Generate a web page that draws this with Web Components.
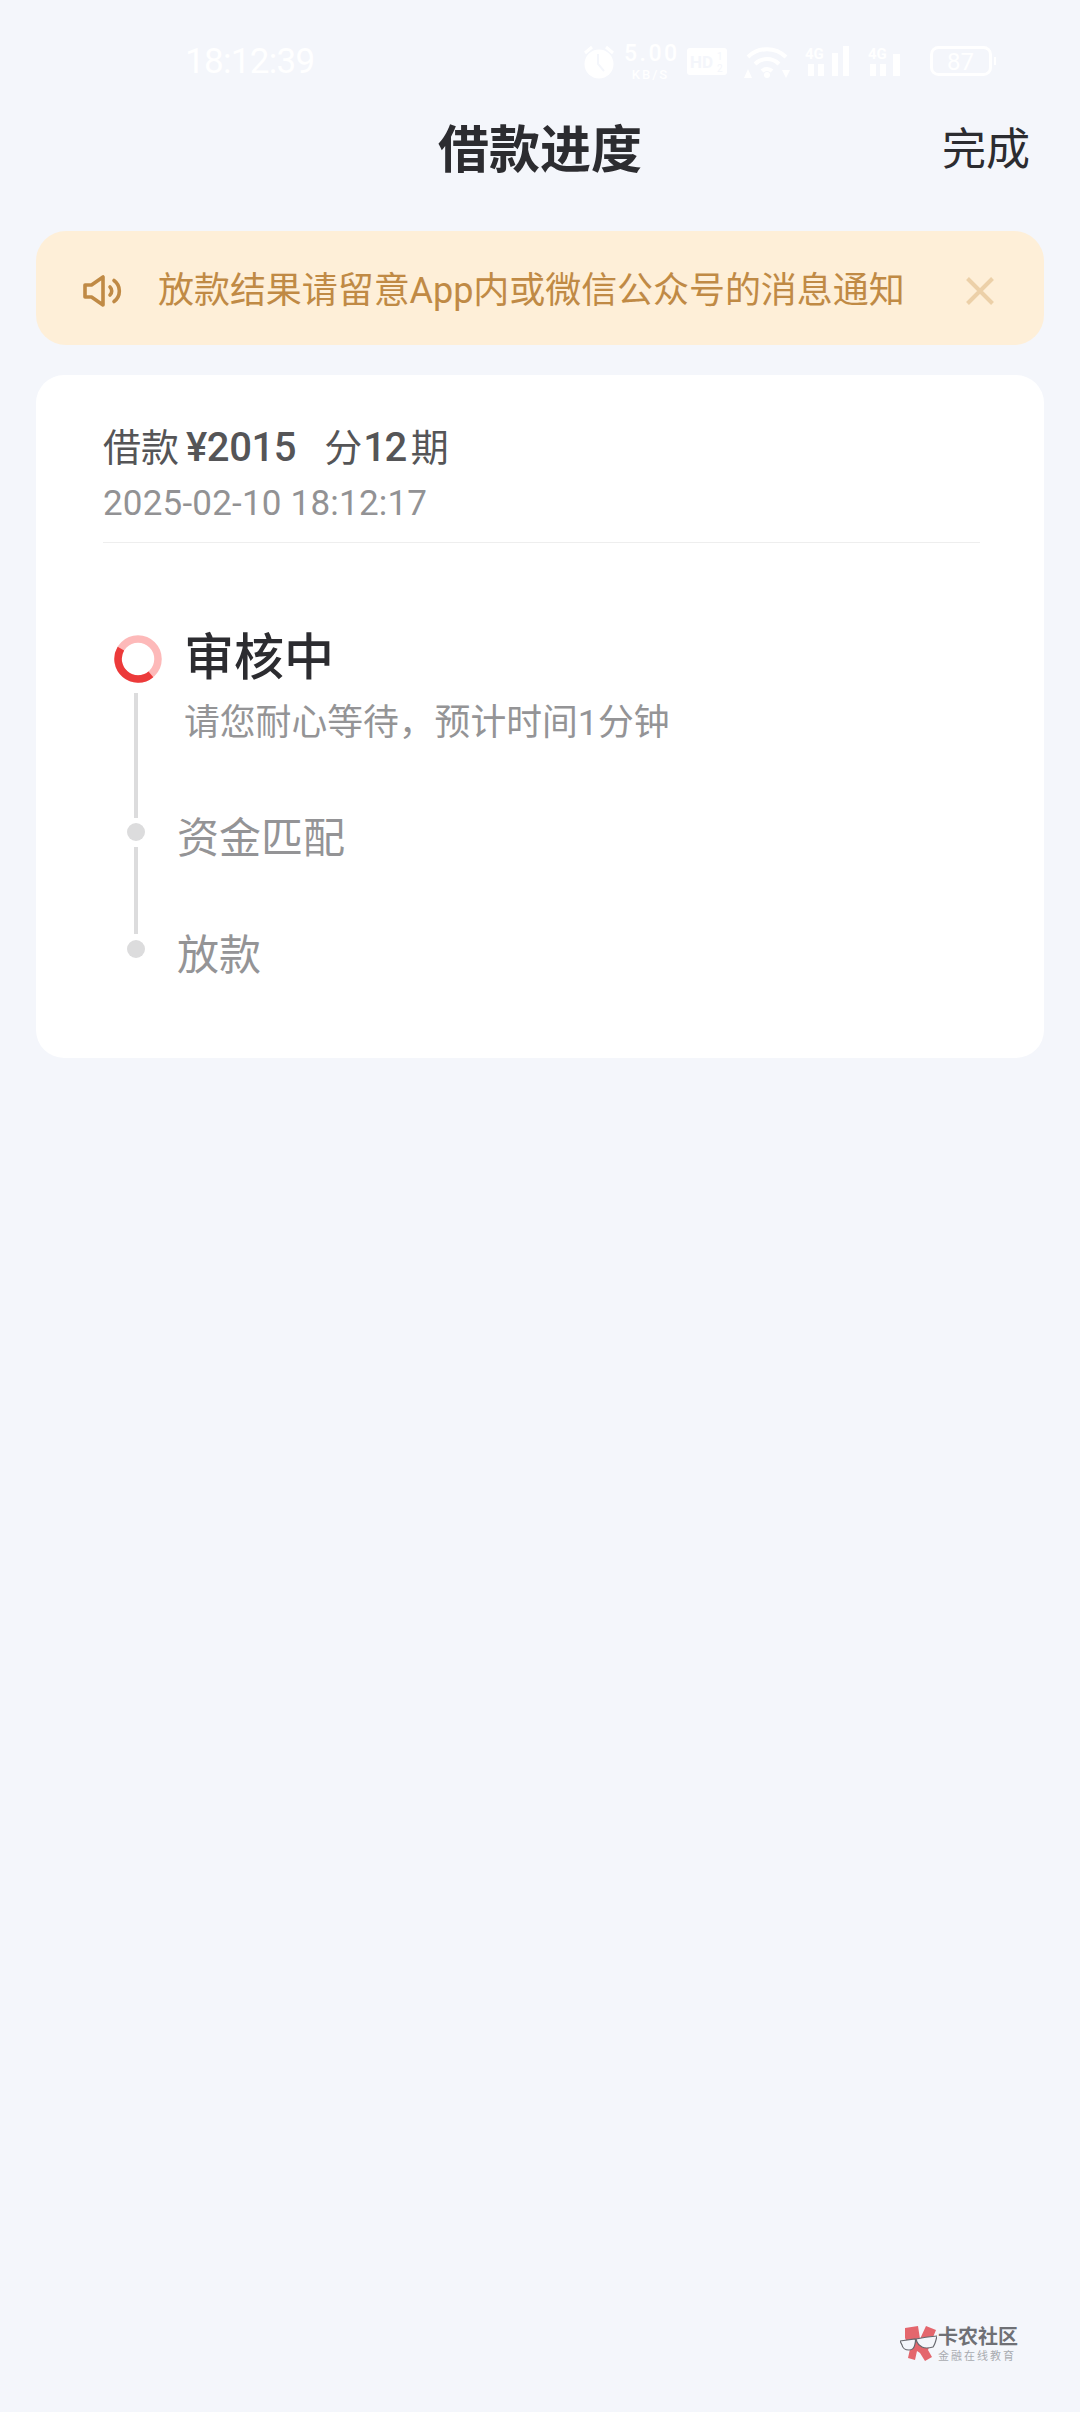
<!DOCTYPE html>
<html lang="zh">
<head>
<meta charset="utf-8">
<title>借款进度</title>
<style>
html,body{margin:0;padding:0;background:#f4f6fb;}
body{width:1080px;height:2412px;position:relative;overflow:hidden;font-family:"Roboto","Noto Sans CJK SC",sans-serif;}
</style>
</head>
<body>
<status-bar></status-bar>
<nav-bar heading="借款进度" action="完成"></nav-bar>
<notice-banner>放款结果请留意App内或微信公众号的消息通知</notice-banner>
<loan-card>
	<span slot="title">借款<b class="a">¥2015</b><i></i>分<b class="c">12</b><u></u>期</span>
	<span slot="time">2025-02-10 18:12:17</span>
	<progress-step state="active" label="审核中" note="请您耐心等待，预计时间1分钟"></progress-step>
	<progress-step label="资金匹配"></progress-step>
	<progress-step label="放款" last></progress-step>
</loan-card>
<water-mark></water-mark>
<script>
class statusbar extends HTMLElement{
	constructor(){
		super()
		this.attachShadow({mode:"open"})
		this.shadowRoot.innerHTML=`
			<style>
				:host{
					display:flex;
					align-items:center;
					height:100px;
					padding:0 84px 0 185px;
					box-sizing:border-box;
					color:#fff;
				}
				.time{font:400 35px "Roboto",sans-serif;letter-spacing:-.7px;margin-top:22px;}
				.icons{margin-left:auto;margin-top:22px;display:flex;align-items:center;}
				.speed{font:500 23px/23px "Roboto",sans-serif;letter-spacing:2.5px;text-align:center;display:flex;flex-direction:column;width:53px;margin:0 10px;white-space:nowrap;}
				.speed small{font-size:13px;line-height:13px;letter-spacing:2px;margin-top:3px;}
				svg{display:block;}
			</style>
			<div class="time">18:12:39</div>
			<div class="icons">
				<svg width="30" height="35" viewBox="0 0 30 35" fill="none"><circle cx="15" cy="20" r="14.5" fill="#fff"/><path d="M1 9l7-6M29 9l-7-6" stroke="#fff" stroke-width="3"/><path d="M14 10v10l6 7" stroke="#f4f6fb" stroke-width="2"/></svg>
				<div class="speed"><span>5.00</span><small>KB/S</small></div>
				<svg width="40" height="27" viewBox="0 0 40 27"><rect width="40" height="27" rx="3" fill="#fff"/><text x="3" y="20" font-size="17" font-family="Roboto" font-weight="700" fill="#f4f6fb">HD</text><text x="30" y="12" font-size="10" font-family="Roboto" fill="#f4f6fb">1</text><text x="30" y="24" font-size="10" font-family="Roboto" fill="#f4f6fb">2</text></svg>
				<svg width="46" height="36" viewBox="0 0 46 36" fill="none" stroke="#fff" stroke-width="4" style="margin-left:17px"><path d="M4 14a27 27 0 0 1 38 0M11 21a17 17 0 0 1 24 0"/><path d="M18 28a7 7 0 0 1 10 0"/><circle cx="23" cy="32" r="3" fill="#fff" stroke="none"/><path d="M4 26l-4 9h8zM38 27h8l-4 8z" fill="#fff" stroke="none"/></svg>
				<svg width="45" height="30" viewBox="0 0 45 30" fill="#fff" style="margin-left:15px"><text x="0" y="13" font-size="15" font-weight="700" font-family="Roboto">4G</text><rect x="3" y="18" width="6" height="12"/><rect x="13" y="18" width="6" height="12"/><rect x="27" y="7" width="6" height="23"/><rect x="38" y="0" width="6" height="30"/></svg>
				<svg width="32" height="30" viewBox="0 0 32 30" fill="#fff" style="margin-left:18px"><text x="0" y="13" font-size="15" font-weight="700" font-family="Roboto">4G</text><rect x="2" y="18" width="6" height="12"/><rect x="12" y="18" width="6" height="12"/><rect x="25" y="8" width="7" height="22"/></svg>
				<svg width="66" height="30" viewBox="0 0 66 30" style="margin-left:30px"><rect x="1.5" y="1.5" width="59" height="27" rx="7" fill="none" stroke="#fff" stroke-width="3"/><rect x="64" y="11" width="2" height="8" fill="#fff"/><text x="17" y="24" font-size="24" font-family="Roboto" fill="#fff">87</text></svg>
			</div>
		`
	}
}

class navbar extends HTMLElement{
	constructor(){
		super()
		this.attachShadow({mode:"open"})
		this.shadowRoot.innerHTML=`
			<style>
				:host{
					display:grid;
					grid-template-columns:1fr auto 1fr;
					align-items:center;
					height:98px;
					box-sizing:border-box;
					padding:0 50px 6px;
					color:#2c2c30;
					font-family:"Noto Sans CJK SC",sans-serif;
				}
				.heading{font-size:51px;font-weight:700;line-height:92px;}
				.action{font-size:44px;justify-self:end;}
			</style>
			<span></span>
			<div class="heading">${this.getAttribute("heading")}</div>
			<div class="action">${this.getAttribute("action")}</div>
		`
	}
}

class noticebanner extends HTMLElement{
	constructor(){
		super()
		this.attachShadow({mode:"open"})
		this.shadowRoot.innerHTML=`
			<style>
				:host{
					display:flex;
					align-items:center;
					height:114px;
					box-sizing:border-box;
					margin:33px 36px 0;
					padding:6px 50px 0 47px;
					background:#feefd8;
					border-radius:30px;
					color:#c08a45;
					font:36px/50px "Roboto","Noto Sans CJK SC",sans-serif;
				}
				.txt{margin-left:33px;white-space:nowrap;letter-spacing:-.06px;}
				svg{display:block;flex:none;}
				.close{margin-left:auto;}
			</style>
			<svg width="42" height="36" viewBox="0 -2 42 36" fill="none" stroke="#c08a45" stroke-width="3.6" stroke-linejoin="round" stroke-linecap="round">
				<path d="M2 10h6.5L20 2v28L8.5 22H2z"/>
				<path d="M27 12a5.5 5.5 0 0 1 0 8"/>
				<path d="M31 5.5a13 13 0 0 1 0 21"/>
			</svg>
			<div class="txt"><slot></slot></div>
			<svg class="close" width="28" height="28" viewBox="0 0 28 28" stroke="#ecd0a8" stroke-width="4"><path d="M1.5 1.5l25 25M26.5 1.5l-25 25"/></svg>
		`
	}
}

class loancard extends HTMLElement{
	constructor(){
		super()
		this.attachShadow({mode:"open"})
		this.shadowRoot.innerHTML=`
			<style>
				:host{
					display:block;
					height:683px;
					box-sizing:border-box;
					margin:30px 36px 0;
					padding:0 64px 0 67px;
					background:#fff;
					border-radius:28px;
				}
				.top{
					padding-top:48px;
					height:168px;
					box-sizing:border-box;
					border-bottom:1px solid #eeeeee;
				}
				.title{font:38px/50px "Roboto","Noto Sans CJK SC",sans-serif;color:#555557;}
				.time{font:35px/44px "Roboto",sans-serif;color:#929294;margin-top:9px;letter-spacing:.2px;}
				.steps{padding:92px 0 0 11px;}
			</style>
			<div class="top">
				<div class="title"><slot name="title"></slot></div>
				<div class="time"><slot name="time"></slot></div>
			</div>
			<div class="steps"><slot></slot></div>
		`
	}
}

class progressstep extends HTMLElement{
	constructor(){
		super()
		this.attachShadow({mode:"open"})
		let active=this.getAttribute("state")=="active"
		let note=this.getAttribute("note")
		this.shadowRoot.innerHTML=`
			<style>
				:host{
					display:grid;
					grid-template-columns:48px 1fr;
					column-gap:${active?"22px":"15px"};
					height:${active?"188px":"117px"};
				}
				.rail{display:flex;flex-direction:column;align-items:center;}
				.rail svg{display:block;flex:none;}
				.dot{width:18px;height:18px;border-radius:50%;background:#dcdcdd;flex:none;margin-right:5px;}
				.line{width:4px;background:#dcdcdd;flex:none;margin-right:5px;}
				.label{color:#949496;font:42px/56px "Noto Sans CJK SC",sans-serif;margin-top:-16px;}
				.active{color:#2c2c30;font-size:50px;line-height:64px;font-weight:500;margin-top:-14px;}
				.note{color:#949496;font:35.8px/50px "Roboto","Noto Sans CJK SC",sans-serif;margin-top:13px;}
			</style>
			<div class="rail">
				${active?`<svg width="48" height="48" viewBox="0 0 48 48" fill="none" stroke-width="7.5">
					<circle cx="24" cy="24" r="20" stroke="#fdb9b9"/>
					<path d="M6.9 13.7A20 20 0 0 0 36.9 39.3" stroke="#ec3a3a"/>
				</svg>`:`<div class="dot"></div>`}
				${this.hasAttribute("last")?"":`<div class="line" style="margin-top:${active?"10px":"6px"};height:${active?"125px":"87px"}"></div>`}
			</div>
			<div>
				<div class="label ${active?"active":""}">${this.getAttribute("label")}</div>
				${note?`<div class="note">${note}</div>`:""}
			</div>
		`
	}
}

class watermark extends HTMLElement{
	constructor(){
		super()
		this.attachShadow({mode:"open"})
		this.shadowRoot.innerHTML=`
			<style>
				:host{
					position:absolute;
					left:900px;
					top:2325px;
					display:flex;
					align-items:center;
					gap:1px;
				}
				svg{display:block;}
				.t1{font:700 20px/22px "Noto Sans CJK SC",sans-serif;color:#6f7075;}
				.t2{font:11px/13px "Noto Sans CJK SC",sans-serif;color:#a9abb0;letter-spacing:2px;margin-top:2px;white-space:nowrap;}
			</style>
			<svg width="37" height="36" viewBox="0 0 37 36">
				<path d="M5 2L18 0l2 13L26 0l10 4-5 12-3 8 4 7-7 4-5-8-3-2-2 9-7-2 2-9-5-11z" fill="#e4666d"/>
				<path d="M0 15l15-2q1 1 0 5-1 6-6 6-6 0-7-5zM16 13q9-2 21-3-2 9-4 11-7 2-11 0-4-2-5-5z" fill="#f4f6fb" stroke="#66676d" stroke-width="1.2"/>
			</svg>
			<div>
				<div class="t1">卡农社区</div>
				<div class="t2">金融在线教育</div>
			</div>
		`
	}
}

customElements.define("status-bar",statusbar)
customElements.define("nav-bar",navbar)
customElements.define("notice-banner",noticebanner)
customElements.define("loan-card",loancard)
customElements.define("progress-step",progressstep)
customElements.define("water-mark",watermark)
</script>
<style>
loan-card b{font-weight:500;font-size:40px;letter-spacing:-.4px;}
loan-card b.a{margin-left:7px;}
loan-card b.c{margin-left:1px;letter-spacing:-1.5px;}
loan-card i{display:inline-block;width:28px;}
loan-card u{display:inline-block;width:5px;}
</style>
</body>
</html>
